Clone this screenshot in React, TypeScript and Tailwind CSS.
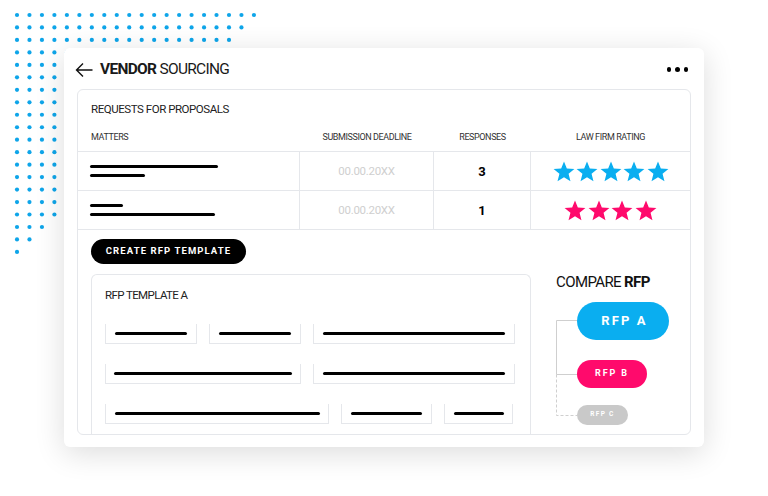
import { ReactNode } from "react";

const font = "font-['Roboto','Noto_Sans',sans-serif]";

function DotTriangle() {
  const dots: ReactNode[] = [];
  for (let i = 0; i < 20; i++) {
    for (let j = 0; j < 20 - i; j++) {
      dots.push(<circle key={`${i}-${j}`} cx={17 + j * 12.47} cy={15 + i * 12.47} r={2.1} fill="#0ea5e9" />);
    }
  }
  return (
    <svg className="absolute left-0 top-0" width="270" height="262">
      {dots}
    </svg>
  );
}

function Star({ color }: { color: string }) {
  return (
    <svg width="22" height="21" viewBox="0 0 24 23">
      <polygon
        points="12,0.5 15.1,8.2 23.4,8.8 17,14.1 19.1,22.2 12,17.8 4.9,22.2 7,14.1 0.6,8.8 8.9,8.2"
        fill={color}
      />
    </svg>
  );
}

function Bar({ w }: { w: number }) {
  return <div className="h-[3.5px] rounded-full bg-black" style={{ width: w }} />;
}

function Field({ w, line }: { w: number; line: number }) {
  return (
    <div
      className="flex h-[20px] items-center justify-center border-x border-b border-gray-200"
      style={{ width: w }}
    >
      <Bar w={line} />
    </div>
  );
}

const rows = [
  { bars: [128, 55], count: 3, stars: 5, color: "#0aaef0" },
  { bars: [33, 125], count: 1, stars: 4, color: "#ff0a6c" },
];

export default function App() {
  return (
    <div className={`relative h-[496px] w-[768px] overflow-hidden bg-white ${font} text-[#1a1a1a]`}>
      <DotTriangle />

      <div className="relative z-10 ml-[64px] mt-[48px] flex h-[399px] w-[640px] flex-col rounded-md bg-white shadow-[0_6px_30px_rgba(0,0,0,0.14)]">
        {/* header */}
        <div className="flex h-[41px] items-center pl-[11px] pr-[16px] pt-[2px]">
          <svg width="18" height="16" viewBox="0 0 18 16" fill="none" stroke="#111" strokeWidth="1.4">
            <path d="M1.5 8H17.5M8 1.5L1.5 8L8 14.5" />
          </svg>
          <div className="ml-[7px] text-[15.5px] leading-none tracking-[-0.7px]">
            <span className="font-bold">VENDOR</span> SOURCING
          </div>
          <div className="ml-auto flex gap-[4px]">
            <span className="h-[4.5px] w-[4.5px] rounded-full bg-black" />
            <span className="h-[4.5px] w-[4.5px] rounded-full bg-black" />
            <span className="h-[4.5px] w-[4.5px] rounded-full bg-black" />
          </div>
        </div>

        {/* inner panel */}
        <div className="mx-[13px] flex h-[346px] flex-col overflow-hidden rounded-md border border-gray-200">
          <div className="h-[34px] pl-[13px] pt-[12px] text-[11.5px] leading-[14px] tracking-[-0.45px] text-[#222]">
            REQUESTS FOR PROPOSALS
          </div>

          <div className="grid grid-cols-[222px_134px_97px_1fr] text-[9px] tracking-[-0.4px] text-[#333]">
            <div className="flex h-[28px] items-center border-b border-gray-200 pl-[13px]">MATTERS</div>
            <div className="flex h-[28px] items-center justify-center border-b border-gray-200">SUBMISSION DEADLINE</div>
            <div className="flex h-[28px] items-center justify-center border-b border-gray-200">RESPONSES</div>
            <div className="flex h-[28px] items-center justify-center border-b border-gray-200">LAW FIRM RATING</div>

            {rows.map((r, i) => (
              <div key={i} className="contents">
                <div className="flex h-[39px] flex-col justify-center gap-[5.5px] border-b border-r border-gray-200 pl-[12px]">
                  <Bar w={r.bars[0]} />
                  <Bar w={r.bars[1]} />
                </div>
                <div className="flex h-[39px] items-center justify-center border-b border-r border-gray-200 pt-[1px] text-[11.5px] tracking-[-0.3px] text-[#cfcfcf]">
                  00.00.20XX
                </div>
                <div className="flex h-[39px] items-center justify-center border-b border-r border-gray-200 pt-[1px] text-[13px] font-bold tracking-normal text-black">
                  {r.count}
                </div>
                <div className="flex h-[39px] items-center justify-center gap-[1.5px] border-b border-gray-200 pt-[1px]">
                  {Array.from({ length: r.stars }).map((_, k) => (
                    <Star key={k} color={r.color} />
                  ))}
                </div>
              </div>
            ))}
          </div>

          <div className="flex min-h-0 flex-1 flex-col pl-[13px] pt-[9px]">
            <button className="flex h-[25px] w-[155px] items-center justify-center rounded-full bg-black text-[9.5px] font-bold tracking-[1.1px] text-white">
              CREATE RFP TEMPLATE
            </button>

            <div className="mt-[10px] flex min-h-0 flex-1">
              <div className="w-[440px] rounded-t-md border-x border-t border-gray-200 pl-[13px] pr-[14px]">
                <div className="pt-[13px] text-[11.5px] leading-[14px] tracking-[-0.6px] text-[#222]">RFP TEMPLATE A</div>
                <div className="mt-[22px] flex flex-col gap-[20px]">
                  <div className="flex gap-[12px]">
                    <Field w={92} line={72} />
                    <Field w={92} line={72} />
                    <Field w={202} line={182} />
                  </div>
                  <div className="flex gap-[12px]">
                    <Field w={196} line={178} />
                    <Field w={202} line={182} />
                  </div>
                  <div className="flex gap-[12px]">
                    <Field w={224} line={205} />
                    <Field w={91} line={71} />
                    <Field w={69} line={50} />
                  </div>
                </div>
              </div>

              <div className="ml-[25px] flex flex-col">
                <div className="mt-[0px] text-[15px] leading-[16px] tracking-[-0.6px] text-[#111]">
                  COMPARE <span className="font-bold">RFP</span>
                </div>
                <div className="mt-[12px] flex">
                  <svg width="21" height="124" className="shrink-0" fill="none" stroke="#cfcfcf" strokeWidth="1">
                    <path d="M0.5 18.5V72.5M0.5 18.5H21M0.5 72.5H21" />
                    <path d="M0.5 72.5V113.5H21" strokeDasharray="3 2" />
                  </svg>
                  <div className="flex flex-col items-start">
                    <div className="flex h-[38px] w-[92px] items-center justify-center rounded-full bg-[#0aaef0] pl-[3px] text-[13px] font-bold tracking-[2.1px] text-white">
                      RFP A
                    </div>
                    <div className="mt-[20px] flex h-[28px] w-[70px] items-center justify-center rounded-full bg-[#ff0a6c] text-[9px] font-bold tracking-[1.9px] text-white">
                      RFP B
                    </div>
                    <div className="mt-[17px] flex h-[20px] w-[51px] items-center justify-center rounded-full bg-[#c9c9c9] text-[6.5px] font-bold tracking-[1.3px] text-white">
                      RFP C
                    </div>
                  </div>
                </div>
              </div>
            </div>
          </div>
        </div>
      </div>
    </div>
  );
}
